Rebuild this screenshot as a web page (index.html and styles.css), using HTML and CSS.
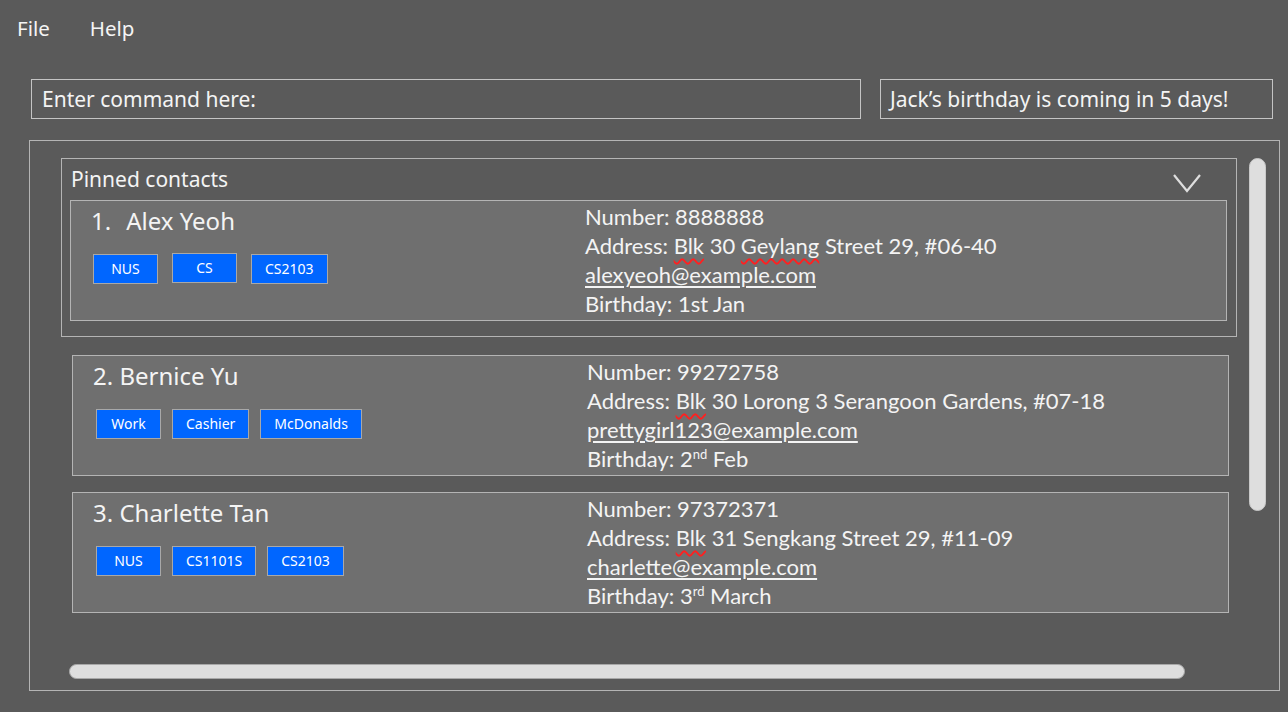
FILE: index.html
```html
<!DOCTYPE html>
<html>
<head>
<meta charset="utf-8">
<link rel="stylesheet" href="styles.css">
</head>
<body>
<nav class="menubar">
  <span class="menu-item">File</span>
  <span class="menu-item">Help</span>
</nav>
<div class="toprow">
  <div class="command-box">Enter command here:</div>
  <div class="notice-box">Jack’s birthday is coming in 5 days!</div>
</div>
<main class="list-panel">
  <section class="pinned">
    <div class="pinned-head">
      <span class="pinned-title">Pinned contacts</span>
      <svg class="chevron" width="30" height="20" viewBox="0 0 30 20"><polyline points="1,2 14,18 27,2" fill="none" stroke="#dedede" stroke-width="2.2"/></svg>
    </div>
    <article class="card card-pinned">
      <div class="left">
        <div class="name"><span class="idx">1.</span>Alex Yeoh</div>
        <div class="tags"><span class="tag">NUS</span><span class="tag tag-up">CS</span><span class="tag">CS2103</span></div>
      </div>
      <div class="details">
        <div>Number: 8888888</div>
        <div>Address: <span class="spell">Blk</span> 30 <span class="spell">Geylang</span> Street 29, #06-40</div>
        <div><span class="email">alexyeoh@example.com</span></div>
        <div>Birthday: 1st Jan</div>
      </div>
    </article>
  </section>
  <div class="contacts">
    <article class="card">
      <div class="left">
        <div class="name">2. Bernice Yu</div>
        <div class="tags"><span class="tag">Work</span><span class="tag">Cashier</span><span class="tag">McDonalds</span></div>
      </div>
      <div class="details">
        <div>Number: 99272758</div>
        <div>Address: <span class="spell">Blk</span> 30 Lorong 3 Serangoon Gardens, #07-18</div>
        <div><span class="email">prettygirl123@example.com</span></div>
        <div>Birthday: 2<sup>nd</sup> Feb</div>
      </div>
    </article>
    <article class="card">
      <div class="left">
        <div class="name">3. Charlette Tan</div>
        <div class="tags"><span class="tag">NUS</span><span class="tag">CS1101S</span><span class="tag">CS2103</span></div>
      </div>
      <div class="details">
        <div>Number: 97372371</div>
        <div>Address: <span class="spell">Blk</span> 31 Sengkang Street 29, #11-09</div>
        <div><span class="email">charlette@example.com</span></div>
        <div>Birthday: 3<sup>rd</sup> March</div>
      </div>
    </article>
  </div>
  <div class="vscroll"></div>
  <div class="hscroll"></div>
</main>
</body>
</html>
```
FILE: styles.css
```css
* { box-sizing: border-box; }
html, body { margin: 0; padding: 0; }
body {
  background: #5a5a5a;
  color: #f4f4f4;
  font-family: "Noto Sans", "Open Sans", sans-serif;
  width: 1288px;
  height: 712px;
  overflow: hidden;
}
.menubar {
  display: flex;
  gap: 40px;
  padding: 14px 0 0 17px;
  height: 79px;
  font-size: 20.5px;
  line-height: 28px;
}
.toprow {
  display: flex;
  gap: 19px;
  padding-left: 31px;
  height: 61px;
}
.command-box, .notice-box {
  height: 40px;
  border: 1px solid #c4c4c4;
  font-size: 21px;
  line-height: 38px;
  padding-left: 10px;
}
.command-box { width: 830px; }
.notice-box { width: 393px; padding-left: 9px; }
.list-panel {
  position: relative;
  margin-left: 29px;
  width: 1251px;
  height: 551px;
  border: 1px solid #b4b4b4;
  padding: 17px 0 0 31px;
}
.pinned {
  width: 1176px;
  height: 179px;
  border: 1px solid #b4b4b4;
  padding: 0 0 0 8px;
}
.pinned-head {
  display: flex;
  justify-content: space-between;
  align-items: center;
  height: 41px;
  padding: 0 33px 0 1px;
}
.pinned-title { font-size: 21px; line-height: 28px; margin-top: -2px; }
.chevron { margin-top: 6px; }
.card {
  display: flex;
  width: 1157px;
  height: 121px;
  background: #6f6f6f;
  border: 1px solid #b4b4b4;
}
.contacts {
  display: flex;
  flex-direction: column;
  gap: 16px;
  padding: 18px 0 0 11px;
}
.left {
  width: 514px;
  padding: 5px 0 0 20px;
}
.name {
  font-size: 24px;
  line-height: 30px;
}
.idx { margin-right: 15px; }
.tags {
  display: flex;
  gap: 11px;
  margin-top: 18px;
  padding-left: 3px;
}
.card-pinned .tags { gap: 14px; padding-left: 2px; }
.card-pinned .left { padding-left: 20px; }
.tag {
  display: inline-block;
  min-width: 65px;
  height: 30px;
  padding: 0 13px;
  background: #0066ff;
  border: 1px solid #a8a8a8;
  font-size: 14px;
  line-height: 28px;
  text-align: center;
  color: #fff;
}
.tag-up { transform: translateY(-1px); }
.details {
  padding-top: 1px;
  font-family: "Lato", "Open Sans", sans-serif;
  font-size: 22px;
  line-height: 29px;
}
.email {
  text-decoration: underline;
  text-underline-offset: 3px;
  text-decoration-thickness: 2px;
}
.spell {
  text-decoration: underline wavy #ff2020;
  text-decoration-thickness: 1.5px;
  text-underline-offset: 4px;
}
sup {
  font-size: 13px;
  line-height: 0;
  vertical-align: 8px;
}
.vscroll {
  position: absolute;
  left: 1219px;
  top: 17px;
  width: 17px;
  height: 353px;
  background: #dedede;
  border-radius: 9px;
  border: 1px solid #c8c8c8;
}
.hscroll {
  position: absolute;
  left: 39px;
  top: 523px;
  width: 1116px;
  height: 15px;
  background: #dedede;
  border-radius: 8px;
  border: 1px solid #a8a8a8;
}
```
